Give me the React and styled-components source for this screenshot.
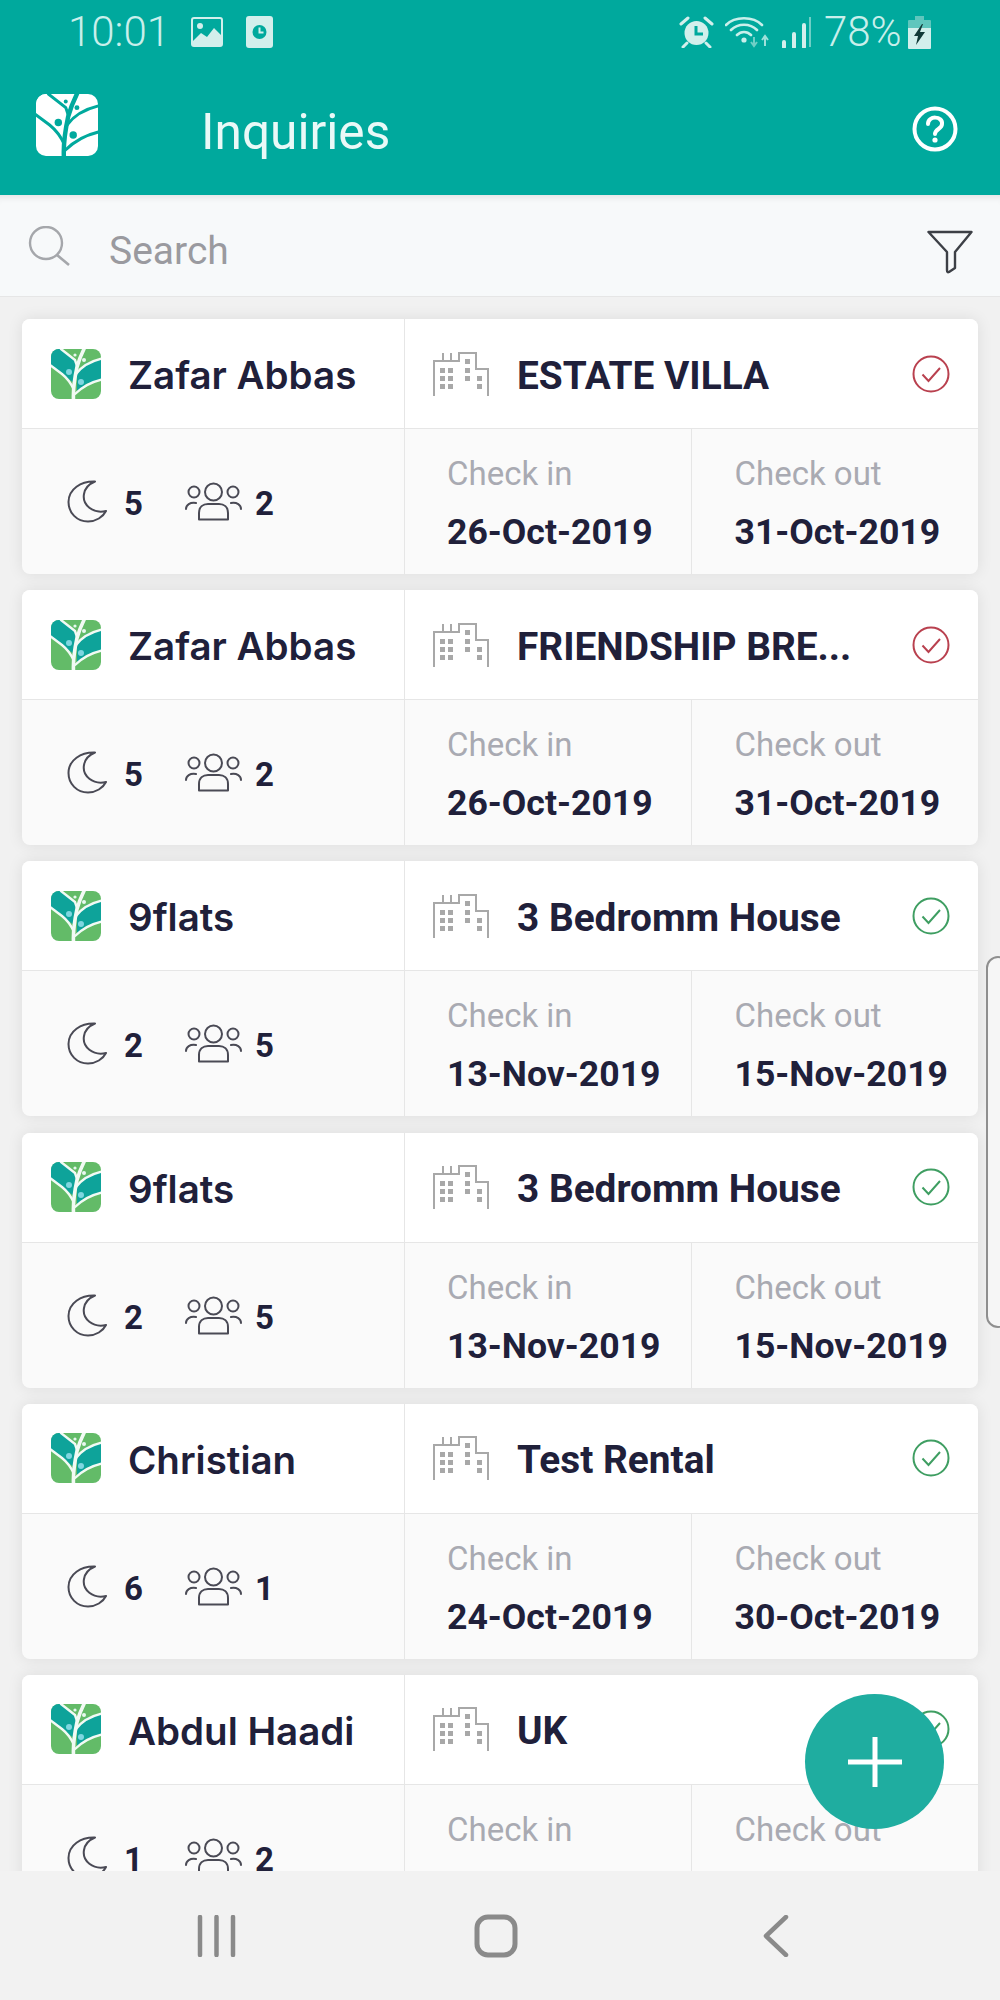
import React from 'react';
import styled, { createGlobalStyle } from 'styled-components';

const GlobalStyle = createGlobalStyle`
  html, body { margin: 0; padding: 0; background: #f1f1f1; }
  * { box-sizing: border-box; }
`;

const Screen = styled.div`
  position: relative;
  width: 1000px;
  height: 2000px;
  display: flex;
  flex-direction: column;
  overflow: hidden;
  font-family: Roboto, "Liberation Sans", sans-serif;
  background: #f1f1f1;
`;

const Header = styled.header`
  flex: 0 0 195px;
  background: #00a99d;
  display: flex;
  flex-direction: column;
`;

const StatusBar = styled.div`
  height: 66px;
  padding: 0 67px 2px 68px;
  display: flex;
  align-items: center;
  color: #c9efeb;
`;

const StatusText = styled.span`
  margin-left: ${props => props.left || 0}px;
  margin-right: ${props => props.right || 0}px;
  font-size: 42px;
  font-weight: 300;
  line-height: 1;
`;

const StatusGroup = styled.div`
  display: flex;
  align-items: center;
  gap: ${props => props.gap || 12}px;
  margin-left: ${props => props.left || 0}px;
`;

const Toolbar = styled.div`
  flex: 1;
  padding: 0 42px 12px 36px;
  display: flex;
  align-items: center;
`;

const Title = styled.h1`
  margin: 15px 0 0 103px;
  flex: 1;
  font-size: 49.6px;
  font-weight: 400;
  color: #e9f9f7;
`;

const HelpSvg = styled.svg`
  flex: none;
  margin-top: 8px;
`;

const SearchBar = styled.div`
  flex: 0 0 102px;
  padding: 0 27px 0 28px;
  display: flex;
  align-items: center;
  background: #f7f9fa;
  border-bottom: 1px solid #e6e6e6;
  box-shadow: inset 0 8px 8px -8px #d5d5d5;
`;

const SearchText = styled.span`
  flex: 1;
  margin: 10px 0 0 39px;
  font-size: 39px;
  color: #9a9a9f;
`;

const FilterSvg = styled.svg`
  flex: none;
  margin-top: 12px;
`;

const List = styled.main`
  flex: 1;
  min-height: 0;
  padding: 22px 22px 0;
  display: flex;
  flex-direction: column;
  gap: 16.2px;
  overflow: hidden;
`;

const Card = styled.article`
  flex: 0 0 255px;
  display: grid;
  grid-template-columns: 383px 1fr 1fr;
  grid-template-rows: 110px 1fr;
  background: #fafafa;
  border-radius: 8px;
  box-shadow: 0 0 16px rgba(0, 0, 0, 0.09);
  overflow: hidden;
`;

const GuestCell = styled.div`
  display: flex;
  align-items: center;
  padding-left: 29px;
  background: #fff;
  border-bottom: 1px solid #e6e6e6;
  border-right: 1px solid #e6e6e6;
`;

const Name = styled.span`
  margin: 3px 0 0 27px;
  font-family: Inter, Roboto, sans-serif;
  font-size: 38.5px;
  font-weight: 600;
  color: #20203a;
  white-space: nowrap;
`;

const PropertyCell = styled.div`
  grid-column: 2 / 4;
  display: flex;
  align-items: center;
  padding: 0 28px 0 28px;
  background: #fff;
  border-bottom: 1px solid #e6e6e6;
`;

const PropertyName = styled.span`
  flex: 1;
  margin: 3px 0 0 28px;
  font-size: 38.8px;
  font-weight: 700;
  color: #20203a;
  white-space: nowrap;
  overflow: hidden;
  text-overflow: ellipsis;
`;

const StayCell = styled.div`
  display: flex;
  align-items: center;
  padding-left: 45px;
  border-right: 1px solid #e6e6e6;
`;

const Count = styled.span`
  margin: 4px ${props => props.right || 0}px 0 ${props => props.left}px;
  font-size: 33px;
  font-weight: 700;
  color: #20203a;
`;

const DateCell = styled.div`
  padding: 25px 0 0 ${props => props.$pad}px;
  border-right: ${props => (props.$divider ? '1px solid #e6e6e6' : 'none')};
`;

const DateLabel = styled.div`
  font-size: 33px;
  line-height: 40px;
  color: #a9aab2;
`;

const DateValue = styled.div`
  margin-top: 18px;
  font-size: 35.6px;
  line-height: 40px;
  font-weight: 700;
  color: #20203a;
  white-space: nowrap;
`;

const NavBar = styled.nav`
  position: relative;
  z-index: 2;
  flex: 0 0 129px;
  padding: 0 211px 0 197px;
  display: flex;
  align-items: center;
  justify-content: space-between;
  background: #f2f2f2;
`;

const HomeSvg = styled.svg`
  margin-right: 8px;
`;

const Fab = styled.button`
  position: absolute;
  left: 805px;
  top: 1694px;
  z-index: 3;
  width: 139px;
  height: 135px;
  padding: 0;
  display: flex;
  align-items: center;
  justify-content: center;
  border: none;
  border-radius: 50%;
  background: #1fada0;
`;

const EdgeHandle = styled.div`
  position: absolute;
  left: 986px;
  top: 956px;
  width: 24px;
  height: 372px;
  border: 2px solid #8f8f8f;
  border-radius: 14px;
  background: #f6f6f6;
`;

const TreeLogo = ({ size = 50, a, b, line, dot, tip }) => (
  <svg width={size} height={size} viewBox="0 0 50 50" style={{ flex: 'none' }}>
    <defs>
      <clipPath id="logo-clip">
        <rect width="50" height="50" rx="8" />
      </clipPath>
    </defs>
    <g clipPath="url(#logo-clip)">
      <rect width="50" height="50" fill={b} />
      <path d="M0 0 H11 L26 14 L23 34 L11 25 L0 17Z" fill={a} />
      <path d="M26 24 L35 14 L50 10 V31 L35 35 L26 43Z" fill={a} />
      <g fill="none" stroke={line} strokeLinecap="round">
        <path d="M22.5 51 C22 42 23 32 26 18 C28 11 30 6 33 0" strokeWidth="3.6" />
        <path d="M-1 16 L11 25 C16 29 20 34 23 41" strokeWidth="2.4" />
        <path d="M10 0 L24 11 L26 17" strokeWidth="2.4" />
        <path d="M51 9.5 C40 12 31 17 25 25" strokeWidth="2.4" />
        <path d="M51 30.5 C40 33 31 38 24 45" strokeWidth="2.4" />
      </g>
      <circle cx="18" cy="23" r="3" fill={dot} />
      <circle cx="30" cy="33" r="3" fill={dot} />
      <circle cx="24" cy="6" r="1.6" fill={tip} />
      <circle cx="33" cy="11" r="2" fill={tip} />
    </g>
  </svg>
);

const PictureIcon = () => (
  <svg width="32" height="30" viewBox="0 0 32 30">
    <rect x="1" y="1" width="30" height="28" rx="2" fill="none" stroke="#d3efec" strokeWidth="2" />
    <path d="M2 24 L10 16 L16 20 L23 11 L30 18 V28 H2Z" fill="#d3efec" />
    <circle cx="9" cy="9" r="3" fill="#d3efec" />
  </svg>
);

const ClockFileIcon = () => (
  <svg width="27" height="32" viewBox="0 0 27 32">
    <rect width="27" height="32" rx="3" fill="#d3efec" />
    <circle cx="13.5" cy="16" r="7" fill="#00a99d" />
    <path d="M13.5 11.5 V16.5 H17.5" fill="none" stroke="#d3efec" strokeWidth="2" />
  </svg>
);

const AlarmIcon = () => (
  <svg width="35" height="32" viewBox="0 0 35 32">
    <circle cx="17.5" cy="17" r="12" fill="#d3efec" />
    <path d="M17 10 V18 H24" fill="none" stroke="#00a99d" strokeWidth="3" />
    <path d="M2 8 L9 2 M33 8 L26 2 M8 27 L4 31 M27 27 L31 31" stroke="#d3efec" strokeWidth="3" strokeLinecap="round" />
  </svg>
);

const WifiIcon = () => (
  <svg width="45" height="32" viewBox="0 0 45 32">
    <path d="M1 9 C10 0, 28 0, 37 9 M6 14 C13 7, 25 7, 32 14 M12 19 C16 15, 22 15, 26 19" fill="none" stroke="#c9efeb" strokeWidth="2.6" strokeLinecap="round" />
    <circle cx="19" cy="24" r="2.6" fill="#c9efeb" />
    <path d="M29 21 V29 M26 26 L29 30 L32 26" fill="none" stroke="#6fcfc6" strokeWidth="2" />
    <path d="M40 30 V21 M37 24 L40 20 L43 24" fill="none" stroke="#9fe0da" strokeWidth="2" />
  </svg>
);

const SignalIcon = () => (
  <svg width="30" height="32" viewBox="0 0 30 32">
    <path d="M3 31 V26 M13 31 V18 M23 31 V9" stroke="#d3efec" strokeWidth="4" strokeLinecap="round" />
    <path d="M29 31 V1" stroke="#6fcfc6" strokeWidth="2" />
  </svg>
);

const BatteryIcon = () => (
  <svg width="23" height="33" viewBox="0 0 23 33">
    <path d="M7 0 H16 V4 H22 Q23 4 23 5 V12 H0 V5 Q0 4 1 4 H7Z" fill="#5fc6bd" />
    <path d="M0 12 H23 V32 Q23 33 22 33 H1 Q0 33 0 32Z" fill="#d3efec" />
    <path d="M14 8 L6 20 H10 L8 29 L17 16 H12 L15 8Z" fill="#123a38" />
  </svg>
);

const HelpIcon = () => (
  <HelpSvg width="46" height="46" viewBox="0 0 46 46" fill="none">
    <circle cx="23" cy="23" r="20.5" stroke="#fff" strokeWidth="4" />
    <path d="M16 18 C16 9, 31 10, 30 18 C30 23, 23 23, 23 28" stroke="#fff" strokeWidth="4" strokeLinecap="round" />
    <circle cx="23" cy="34" r="2.6" fill="#fff" />
  </HelpSvg>
);

const SearchIcon = () => (
  <svg width="42" height="40" viewBox="0 0 42 40" fill="none" style={{ flex: 'none' }}>
    <circle cx="18" cy="17" r="16" stroke="#a5a7ab" strokeWidth="2.4" />
    <path d="M29 29 L41 39" stroke="#a5a7ab" strokeWidth="2.6" />
  </svg>
);

const FilterIcon = () => (
  <FilterSvg width="46" height="44" viewBox="0 0 46 44" fill="none">
    <path d="M1.5 2 H44.5 L28 22 V38 L22 42 Q20 43 20 40 V22Z" stroke="#3d4046" strokeWidth="2.4" strokeLinejoin="round" />
  </FilterSvg>
);

const MoonIcon = () => (
  <svg width="40" height="43" viewBox="0 0 40 43" fill="none" style={{ flex: 'none' }}>
    <path d="M28 1.5 C14 1 1.5 9 1.5 22 C1.5 33 10 41.5 21 41.5 C29 41.5 36 37 39 31 C26 34 15 25 17 14 C18 8 22 4 28 1.5Z" stroke="#4a4a55" strokeWidth="2" strokeLinejoin="round" />
  </svg>
);

const PeopleIcon = () => (
  <svg width="57" height="39" viewBox="0 0 57 39" fill="none" style={{ flex: 'none' }}>
    <g stroke="#4a4a55" strokeWidth="2">
      <circle cx="28.5" cy="10" r="8.5" />
      <circle cx="9" cy="10" r="5.5" />
      <circle cx="48" cy="10" r="5.5" />
      <path d="M14 37.5 V31 C14 25 18 22 23 22 H34 C39 22 43 25 43 31 V37.5 Z" strokeLinejoin="round" />
      <path d="M1 27 C1 23 5 20 11 21" strokeLinecap="round" />
      <path d="M56 27 C56 23 52 20 46 21" strokeLinecap="round" />
    </g>
  </svg>
);

const BuildingIcon = () => (
  <svg width="56" height="44" viewBox="0 0 56 44" fill="none" style={{ flex: 'none' }}>
    <path d="M1 44 V9 H26 V1 H43 V17 H55 V44 M10 1 V9 M18 1 V9" stroke="#a8a8a8" strokeWidth="2" />
    <g fill="#a8a8a8">
      <rect x="7" y="16" width="5" height="5" />
      <rect x="15" y="16" width="5" height="5" />
      <rect x="7" y="24" width="5" height="5" />
      <rect x="15" y="24" width="5" height="5" />
      <rect x="7" y="32" width="5" height="5" />
      <rect x="15" y="32" width="5" height="5" />
      <rect x="32" y="7" width="5" height="5" />
      <rect x="32" y="16" width="5" height="5" />
      <rect x="32" y="24" width="5" height="5" />
      <rect x="44" y="24" width="5" height="5" />
      <rect x="44" y="32" width="5" height="5" />
    </g>
  </svg>
);

const CheckIcon = ({ color }) => (
  <svg width="38" height="38" viewBox="0 0 38 38" fill="none" style={{ flex: 'none' }}>
    <circle cx="19" cy="19" r="17.5" stroke={color} strokeWidth="2" />
    <path d="M10.5 19.5 L16.5 26 L28 13" stroke={color} strokeWidth="2" />
  </svg>
);

const inquiries = [
  { name: 'Zafar Abbas', place: 'ESTATE VILLA', nights: 5, guests: 2, checkIn: '26-Oct-2019', checkOut: '31-Oct-2019', color: '#b9414f' },
  { name: 'Zafar Abbas', place: 'FRIENDSHIP BRE...', nights: 5, guests: 2, checkIn: '26-Oct-2019', checkOut: '31-Oct-2019', color: '#b9414f' },
  { name: '9flats', place: '3 Bedromm House', nights: 2, guests: 5, checkIn: '13-Nov-2019', checkOut: '15-Nov-2019', color: '#3f9e62' },
  { name: '9flats', place: '3 Bedromm House', nights: 2, guests: 5, checkIn: '13-Nov-2019', checkOut: '15-Nov-2019', color: '#3f9e62' },
  { name: 'Christian', place: 'Test Rental', nights: 6, guests: 1, checkIn: '24-Oct-2019', checkOut: '30-Oct-2019', color: '#3f9e62' },
  { name: 'Abdul Haadi', place: 'UK', nights: 1, guests: 2, checkIn: '', checkOut: '', color: '#3f9e62' },
];

const InquiryCard = ({ item }) => (
  <Card>
    <GuestCell>
      <TreeLogo a="#0ea39a" b="#63bb68" line="#f2faf4" dot="#7fd6e0" tip="#e8f7f0" />
      <Name>{item.name}</Name>
    </GuestCell>
    <PropertyCell>
      <BuildingIcon />
      <PropertyName>{item.place}</PropertyName>
      <CheckIcon color={item.color} />
    </PropertyCell>
    <StayCell>
      <MoonIcon />
      <Count left={17} right={42}>{item.nights}</Count>
      <PeopleIcon />
      <Count left={13}>{item.guests}</Count>
    </StayCell>
    <DateCell $pad={42} $divider>
      <DateLabel>Check in</DateLabel>
      <DateValue>{item.checkIn}</DateValue>
    </DateCell>
    <DateCell $pad={43}>
      <DateLabel>Check out</DateLabel>
      <DateValue>{item.checkOut}</DateValue>
    </DateCell>
  </Card>
);

export default function App() {
  return (
    <Screen>
      <GlobalStyle />
      <Header>
        <StatusBar>
          <StatusText>10:01</StatusText>
          <StatusGroup left={21} gap={23}>
            <PictureIcon />
            <ClockFileIcon />
          </StatusGroup>
          <StatusGroup left={406} gap={11}>
            <AlarmIcon />
            <WifiIcon />
            <SignalIcon />
            <StatusText left={2} right={-5}>78%</StatusText>
            <BatteryIcon />
          </StatusGroup>
        </StatusBar>
        <Toolbar>
          <TreeLogo size={62} a="#ffffff" b="#ffffff" line="#00a99d" dot="#00a99d" tip="#00a99d" />
          <Title>Inquiries</Title>
          <HelpIcon />
        </Toolbar>
      </Header>
      <SearchBar>
        <SearchIcon />
        <SearchText>Search</SearchText>
        <FilterIcon />
      </SearchBar>
      <List>
        {inquiries.map((item, i) => (
          <InquiryCard key={i} item={item} />
        ))}
      </List>
      <NavBar>
        <svg width="39" height="42" viewBox="0 0 39 42">
          <path d="M3 2 V40 M19.5 2 V40 M36 2 V40" stroke="#8a8a8a" strokeWidth="4.5" strokeLinecap="round" />
        </svg>
        <HomeSvg width="44" height="44" viewBox="0 0 44 44" fill="none">
          <rect x="3" y="3" width="38" height="38" rx="11" stroke="#8a8a8a" strokeWidth="5" />
        </HomeSvg>
        <svg width="26" height="42" viewBox="0 0 26 42" fill="none">
          <path d="M23 2 L3 21 L23 40" stroke="#8a8a8a" strokeWidth="4.5" strokeLinecap="round" strokeLinejoin="round" />
        </svg>
      </NavBar>
      <Fab aria-label="Add">
        <svg width="54" height="50" viewBox="0 0 54 50">
          <path d="M0 25 H54 M27 0 V50" stroke="#fff" strokeWidth="5" />
        </svg>
      </Fab>
      <EdgeHandle />
    </Screen>
  );
}
